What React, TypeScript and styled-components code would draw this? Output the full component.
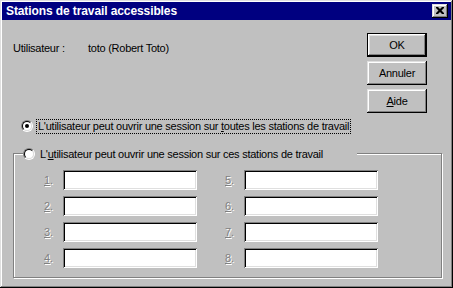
import React from 'react';
import styled, { createGlobalStyle } from 'styled-components';

const GlobalStyle = createGlobalStyle`
  html, body {
    margin: 0;
    padding: 0;
    background: #c0c0c0;
  }
  body {
    font-family: "Liberation Sans", Arial, sans-serif;
    font-size: 11px;
    letter-spacing: -0.25px;
  }
`;

const bevelOut = `
  inset -1px -1px 0 #000,
  inset 1px 1px 0 #dfdfdf,
  inset -2px -2px 0 #808080,
  inset 2px 2px 0 #fff
`;

const App: React.FC = () => {
  const left = [1, 2, 3, 4];
  const right = [5, 6, 7, 8];

  return (
    <>
      <GlobalStyle />
      <Window>
        <TitleBar>
          <Title>Stations de travail accessibles</Title>
          <CloseButton aria-label="Fermer">
            <svg width="8" height="7" viewBox="0 0 8 7">
              <path d="M0 0h2l2 2 2-2h2v1L5.5 3.5 8 6v1H6L4 5 2 7H0V6l2.5-2.5L0 1z" fill="#000" />
            </svg>
          </CloseButton>
        </TitleBar>

        <Body>
          <TopRow>
            <UserInfo>
              <span className="key">Utilisateur :</span>
              <span>toto (Robert Toto)</span>
            </UserInfo>
            <ButtonColumn>
              <Button $default>OK</Button>
              <Button>Annuler</Button>
              <Button>
                <u>A</u>ide
              </Button>
            </ButtonColumn>
          </TopRow>

          <RadioRow>
            <Radio $checked />
            <RadioLabel $focused>
              L'utilisateur peut ouvrir une session sur <u>t</u>outes les stations de travail
            </RadioLabel>
          </RadioRow>

          <GroupBox>
            <Legend>
              <Radio />
              <RadioLabel>
                L'<u>u</u>tilisateur peut ouvrir une session sur ces stations de travail
              </RadioLabel>
            </Legend>
            <FieldGrid>
              <Column>
                {left.map(n => (
                  <Field key={n}>
                    <FieldLabel>
                      <u>{n}</u>.
                    </FieldLabel>
                    <TextBox />
                  </Field>
                ))}
              </Column>
              <Column>
                {right.map(n => (
                  <Field key={n}>
                    <FieldLabel>
                      <u>{n}</u>.
                    </FieldLabel>
                    <TextBox />
                  </Field>
                ))}
              </Column>
            </FieldGrid>
          </GroupBox>
        </Body>
      </Window>
    </>
  );
};

const Window = styled.div`
  width: 453px;
  height: 288px;
  box-sizing: border-box;
  padding: 2px;
  background: #c0c0c0;
  box-shadow: ${bevelOut};
  display: flex;
  flex-direction: column;
`;

const TitleBar = styled.div`
  height: 18px;
  background: #000080;
  display: flex;
  align-items: center;
  justify-content: space-between;
  padding: 0 3px 0 4px;
`;

const Title = styled.span`
  color: #fff;
  font-weight: bold;
  font-size: 12px;
  letter-spacing: -0.1px;
`;

const CloseButton = styled.div`
  width: 16px;
  height: 14px;
  box-sizing: border-box;
  background: #c0c0c0;
  box-shadow: ${bevelOut};
  display: flex;
  align-items: center;
  justify-content: center;
  padding-bottom: 1px;
`;

const Body = styled.div`
  flex: 1;
  padding: 13px 24px 0 9px;
  display: flex;
  flex-direction: column;
`;

const TopRow = styled.div`
  display: flex;
  justify-content: space-between;
`;

const UserInfo = styled.div`
  margin: 9px 0 0 2px;
  color: #000;
  line-height: 13px;
  display: flex;

  .key {
    width: 75px;
  }
`;

const ButtonColumn = styled.div`
  display: flex;
  flex-direction: column;
  gap: 4px;
`;

const Button = styled.div<{ $default?: boolean }>`
  width: 60px;
  height: 24px;
  box-sizing: border-box;
  display: flex;
  align-items: center;
  justify-content: center;
  color: #000;
  box-shadow: ${p =>
    p.$default
      ? `inset 0 0 0 1px #000,
         inset -2px -2px 0 #000,
         inset 2px 2px 0 #fff,
         inset -3px -3px 0 #808080,
         inset 3px 3px 0 #dfdfdf`
      : bevelOut};
`;

const RadioRow = styled.div`
  display: flex;
  align-items: center;
  height: 14px;
  margin: 6px 0 0 10px;
`;

const Radio = styled.span<{ $checked?: boolean }>`
  position: relative;
  width: 12px;
  height: 12px;
  box-sizing: border-box;
  border-radius: 50%;
  border: 1px solid;
  border-color: #808080 #fff #fff #808080;
  flex-shrink: 0;

  &::before {
    content: '';
    position: absolute;
    inset: 0;
    border-radius: 50%;
    border: 1px solid;
    border-color: #000 #dfdfdf #dfdfdf #000;
    background: #fff;
  }

  &::after {
    content: '';
    display: ${p => (p.$checked ? 'block' : 'none')};
    position: absolute;
    left: 3px;
    top: 3px;
    width: 4px;
    height: 4px;
    border-radius: 50%;
    background: #000;
  }
`;

const RadioLabel = styled.span<{ $focused?: boolean }>`
  margin-left: 4px;
  padding: 0 1px;
  line-height: 13px;
  color: #000;
  white-space: nowrap;
  outline: ${p => (p.$focused ? '1px dotted #000' : 'none')};
`;

const GroupBox = styled.div`
  position: relative;
  margin: 20px 0 0 2px;
  width: 429px;
  height: 125px;
  box-sizing: border-box;
  border: 1px solid #808080;
  box-shadow: inset 1px 1px 0 #fff, 1px 1px 0 #fff;
  padding: 16px 0 0 30px;
`;

const Legend = styled.div`
  position: absolute;
  top: -7px;
  left: 9px;
  width: 334px;
  height: 14px;
  background: #c0c0c0;
  display: flex;
  align-items: center;
`;

const FieldGrid = styled.div`
  display: flex;
  gap: 28px;
`;

const Column = styled.div`
  display: flex;
  flex-direction: column;
  gap: 6px;
`;

const Field = styled.div`
  display: flex;
  align-items: center;
`;

const FieldLabel = styled.span`
  width: 19px;
  color: #808080;
  text-shadow: 1px 1px 0 #fff;
`;

const TextBox = styled.div`
  width: 134px;
  height: 20px;
  box-sizing: border-box;
  background: #fff;
  box-shadow:
    inset 1px 1px 0 #808080,
    inset -1px -1px 0 #fff,
    inset 2px 2px 0 #000,
    inset -2px -2px 0 #dfdfdf;
`;

export default App;
